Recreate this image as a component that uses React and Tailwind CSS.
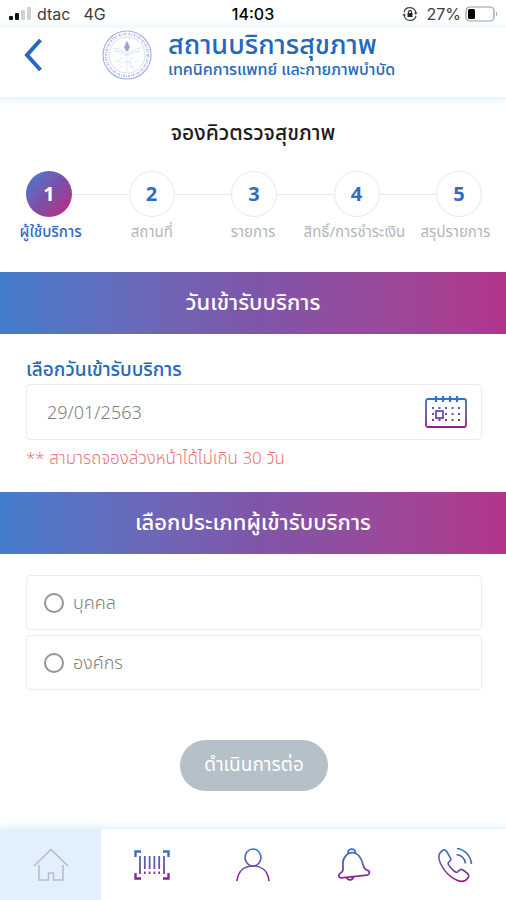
import React, { useState } from 'react';

const steps = ['ผู้ใช้บริการ', 'สถานที่', 'รายการ', 'สิทธิ์/การชำระเงิน', 'สรุปรายการ'];

const customerTypes = [
  { id: 'person', label: 'บุคคล' },
  { id: 'company', label: 'องค์กร' },
];

// Shared vertical blue to purple stroke used by the icons
function Gradients() {
  return (
    <svg width="0" height="0" className="absolute" aria-hidden="true">
      <defs>
        <linearGradient id="brand" gradientUnits="userSpaceOnUse" x1="0" y1="0" x2="0" y2="36">
          <stop offset="0" stopColor="#2c78cf" />
          <stop offset="0.5" stopColor="#6654a8" />
          <stop offset="1" stopColor="#a01088" />
        </linearGradient>
      </defs>
    </svg>
  );
}

function StatusBar() {
  return (
    <div className="grid h-7 grid-cols-3 items-center pr-2 pl-2 font-['Inter'] text-[16px] leading-7 text-[#3c3c3c]">
      <div className="flex items-center gap-[5px]">
        <svg width="24" height="14" viewBox="0 0 24 14" aria-hidden="true">
          <rect x="1" y="9" width="4" height="4" rx="1" fill="#111" />
          <rect x="7" y="6" width="4" height="7" rx="1" fill="#111" />
          <rect x="13" y="3" width="4" height="10" rx="1" fill="#d2d2d2" />
          <rect x="19" y="0" width="4" height="13" rx="1" fill="#d2d2d2" />
        </svg>
        <span>dtac</span>
        <span className="ml-2">4G</span>
      </div>
      <div className="text-center font-medium text-black">14:03</div>
      <div className="flex items-center justify-end gap-1">
        <svg width="16" height="16" viewBox="0 0 16 16" fill="none" stroke="#444" strokeWidth="1.3" aria-hidden="true">
          <path d="M2 6.200A6 6 0 0 1 13.800 7M14 9.800A6 6 0 0 1 2.200 9" />
          <path d="M12 6.500h3.600L13.800 9zM0.400 9.500h3.600L2.200 7z" fill="#444" stroke="none" />
          <rect x="5.500" y="7" width="5" height="4" fill="#222" stroke="none" />
          <path d="M6.500 7V6a1.500 1.500 0 0 1 3 0v1" />
        </svg>
        <span className="ml-1">27%</span>
        <svg width="33" height="16" viewBox="0 0 33 16" aria-hidden="true">
          <rect x="1" y="1" width="28" height="14" rx="4" fill="#fff" stroke="#9a9a9a" strokeWidth="1.200" />
          <rect x="3" y="3" width="7" height="10" rx="1.500" fill="#000" />
          <path d="M31 5.500q2 2.500 0 5z" fill="#9a9a9a" />
        </svg>
      </div>
    </div>
  );
}

function Seal() {
  return (
    <svg className="shrink-0" width="50" height="50" viewBox="0 0 50 50" fill="none" stroke="#a3b4e0" aria-hidden="true">
      <circle cx="25" cy="25" r="24" strokeWidth="1.200" />
      <circle cx="25" cy="25" r="21" strokeWidth="2.600" strokeDasharray="1.600 1.100 0.800 1.500" stroke="#b5c2e6" />
      <circle cx="25" cy="25" r="18" strokeWidth="0.700" stroke="#c3cfee" />
      <path d="M25 11l-3 7h6zM23 18h4l-1 3h-2z" fill="#8ea3da" strokeWidth="0.500" />
      <path d="M11 18q7 0 14 6q7-6 14-6M12 21q7 0 13 5q6-5 13-5" strokeWidth="0.700" stroke="#cdd7f0" />
      <path d="M25 22v20M18 28v9h5M18 28h4M32 28h-4v9h5M20 32h10M13 31h4M33 31h4" strokeWidth="0.800" stroke="#dde4f5" />
    </svg>
  );
}

function Header() {
  return (
    <header className="flex h-[69px] items-start gap-[60px] px-6 shadow-[0_1px_8px_2px_#e4f1fa]">
      <a href="#back" aria-label="ย้อนกลับ" className="mt-2.5">
        <svg width="18" height="34" viewBox="0 0 18 34" fill="none" stroke="#2668c2" strokeWidth="4">
          <path d="M16.500 2L3 17l13.500 15" />
        </svg>
      </a>
      <div className="flex items-start gap-4 pt-[2px]">
        <Seal />
        <div className="text-[#2468be]">
          <h1 className="text-[27px] leading-7 font-medium whitespace-nowrap">สถานบริการสุขภาพ</h1>
          <p className="text-[16px] leading-[22px] font-medium whitespace-nowrap">เทคนิคการแพทย์ และกายภาพบำบัด</p>
        </div>
      </div>
    </header>
  );
}

function Stepper({ current }) {
  return (
    <div>
      <div className="flex items-center pr-6 pl-[26px]">
        {steps.map((step, i) => (
          <React.Fragment key={step}>
            {i > 0 && <span className="h-px flex-1 bg-[#e9e9ec]" />}
            <span
              className={
                i === current
                  ? 'flex size-[46px] items-center justify-center rounded-full bg-linear-135 from-[#2f7ed3] via-[#7a50a8] to-[#c00080] text-[20px] font-bold text-white'
                  : 'flex size-[46px] items-center justify-center rounded-full border border-[#e9e9ec] bg-white text-[20px] font-bold text-[#2f6cc4]'
              }
            >
              {i + 1}
            </span>
          </React.Fragment>
        ))}
      </div>
      <div className="mt-1 grid grid-cols-5 text-center text-[15px] leading-5">
        {steps.map((step, i) => (
          <span key={step} className={i === current ? 'font-medium whitespace-nowrap text-[#2f6cc4]' : 'whitespace-nowrap text-[#b4b7bc]'}>
            {step}
          </span>
        ))}
      </div>
    </div>
  );
}

function Banner({ children }) {
  return (
    <h2 className="flex h-[62px] items-center justify-center bg-linear-to-r from-[#417dcc] via-[#7e56aa] to-[#b2358b] pb-1 text-[22px] font-medium text-white">
      {children}
    </h2>
  );
}

function CalendarIcon() {
  return (
    <svg width="44" height="34" viewBox="0 0 44 34" fill="none" stroke="url(#brand)" strokeWidth="1.800" aria-hidden="true">
      <rect x="2" y="4" width="40" height="28" rx="2" />
      <path d="M12 1v6M19 1v6M26 1v6M33 1v6" strokeWidth="2.200" />
      <path d="M8 13h30M8 19h30M8 25h30" strokeWidth="2" strokeDasharray="2 4.500" />
      <rect x="12" y="16" width="7" height="7" fill="#fff" />
    </svg>
  );
}

function HomeIcon() {
  return (
    <svg width="36" height="36" viewBox="0 0 36 36" fill="none" stroke="#b3bec6" strokeWidth="1.500" aria-hidden="true">
      <path d="M1 19L18 2.500L35 19" />
      <path d="M6 18v15h9.500v-7h5v7H30V18" />
    </svg>
  );
}

function BarcodeIcon() {
  return (
    <svg width="36" height="36" viewBox="0 0 36 36" fill="none" stroke="url(#brand)" strokeWidth="1.800" aria-hidden="true">
      <path d="M1.500 10V4.500H7M29 4.500h5.500V10M1.500 26v5.500H7M29 31.500h5.500V26" strokeWidth="2.400" />
      <path d="M6 9v18M30 9v18M10.800 9v13M15.600 9v13M20.400 9v13M25.200 9v13" />
      <path d="M10.800 24.500v2.500M15.600 24.500v2.500M20.400 24.500v2.500M25.200 24.500v2.500" />
    </svg>
  );
}

function UserIcon() {
  return (
    <svg width="36" height="36" viewBox="0 0 36 36" fill="none" stroke="url(#brand)" strokeWidth="1.600" aria-hidden="true">
      <ellipse cx="18" cy="10.500" rx="8" ry="8.500" />
      <path d="M2 34C3 24.500 9 19 18 19s15 5.500 16 15" />
    </svg>
  );
}

function BellIcon() {
  return (
    <svg width="36" height="36" viewBox="0 0 36 36" fill="none" stroke="url(#brand)" strokeWidth="1.800" strokeLinejoin="round" aria-hidden="true">
      <path d="M12.500 6.500C6 10 6.500 17 7 21c.3 3-.8 4.200-3 5.500-2.200 1.300-1.200 4.700 1.500 4.400L31 28.200c2.800-.3 3.200-4 .5-4.800-2.500-.8-3.700-2.400-4.300-5C26 12.500 24 7.500 18.500 6c-2-.5-4.200-.3-6 .5z" />
      <path d="M12 7c-.5-6 7-6.500 7.500-.8" />
      <path d="M10.500 30.500c1.500 3.500 6 3 7-.8" />
    </svg>
  );
}

function PhoneIcon() {
  return (
    <svg width="36" height="36" viewBox="0 0 36 36" fill="none" stroke="url(#brand)" strokeWidth="1.600" strokeLinejoin="round" aria-hidden="true">
      <path d="M5.500 3.500C1 6.500 1 11 3.500 16.500c3.500 7.500 9 13.500 16.500 16.800 4.500 2 8.500 1.200 11-2.500 1.300-2 .8-3.500-1-4.800l-4-3c-1.700-1.200-3-.8-4 .6l-1.200 1.200c-1.200 1-2.500.4-4-.9-2.200-1.900-4-4-5.300-6.200-.7-1.300-.3-2.200.8-3 1.700-1.200 2-2.200.9-4L10 5C8.800 3 7.300 2.300 5.500 3.500z" />
      <path d="M20 1.500C28 2.500 33.500 8.500 34.500 17M19.500 7.500c5 .7 8.300 4.200 9 9" />
    </svg>
  );
}

const navItems = [
  { id: 'home', label: 'หน้าหลัก', Icon: HomeIcon },
  { id: 'scan', label: 'สแกน', Icon: BarcodeIcon },
  { id: 'profile', label: 'โปรไฟล์', Icon: UserIcon },
  { id: 'alerts', label: 'แจ้งเตือน', Icon: BellIcon },
  { id: 'contact', label: 'ติดต่อ', Icon: PhoneIcon },
];

function BottomNav({ active }) {
  return (
    <nav className="mt-auto grid h-[71px] grid-cols-5 shadow-[0_-1px_6px_2px_#e4f3fc]">
      {navItems.map(({ id, label, Icon }) => (
        <a
          key={id}
          href={`#${id}`}
          aria-label={label}
          className={id === active ? 'flex items-center justify-center bg-[#e1f0fc]' : 'flex items-center justify-center bg-white'}
        >
          <Icon />
        </a>
      ))}
    </nav>
  );
}

export default function App() {
  const [date, setDate] = useState('29/01/2563');
  const [type, setType] = useState('');

  return (
    <div lang="th" className="flex min-h-screen flex-col bg-white font-['Noto_Sans','Noto_Sans_Thai',sans-serif]">
      <Gradients />
      <StatusBar />
      <Header />

      <main>
        <h2 className="pt-5 pb-6 text-center text-[21px] leading-[30px] font-medium text-[#1c1c1c]">จองคิวตรวจสุขภาพ</h2>
        <Stepper current={0} />

        <div className="mt-[31px]">
          <Banner>วันเข้ารับบริการ</Banner>
        </div>
        <section className="pt-5 pr-6 pb-5 pl-[26px]">
          <label htmlFor="date" className="block text-[19px] leading-[30px] font-medium text-[#2468be]">
            เลือกวันเข้ารับบริการ
          </label>
          <div className="flex h-14 items-center rounded border border-[#ececee] pr-[13px] pl-5">
            <input
              id="date"
              value={date}
              onChange={(e) => setDate(e.target.value)}
              className="min-w-0 flex-1 text-[18px] font-light text-[#808080] outline-none"
            />
            <button type="button" aria-label="เปิดปฏิทิน">
              <CalendarIcon />
            </button>
          </div>
          <p className="pt-1 text-[17px] leading-7 font-light text-[#ea7474]">** สามารถจองล่วงหน้าได้ไม่เกิน 30 วัน</p>
        </section>

        <Banner>เลือกประเภทผู้เข้ารับบริการ</Banner>
        <form className="flex flex-col items-center pt-[21px] pr-6 pb-9 pl-[26px]">
          <div className="flex w-full flex-col gap-[5px]">
            {customerTypes.map((item) => (
              <label
                key={item.id}
                className="flex h-[55px] items-center gap-[9px] rounded border border-[#ececee] px-[17px] text-[18px] font-light text-[#808080]"
              >
                <input
                  type="radio"
                  name="customerType"
                  value={item.id}
                  checked={type === item.id}
                  onChange={() => setType(item.id)}
                  className="size-5 appearance-none rounded-full border-2 border-[#949494] checked:border-[6px] checked:border-[#2f6cc4]"
                />
                {item.label}
              </label>
            ))}
          </div>
          <button type="button" className="mt-[50px] h-[51px] rounded-full bg-[#b5c0c8] px-6 pb-0.5 text-[19px] text-white">
            ดำเนินการต่อ
          </button>
        </form>
      </main>

      <BottomNav active="home" />
    </div>
  );
}
